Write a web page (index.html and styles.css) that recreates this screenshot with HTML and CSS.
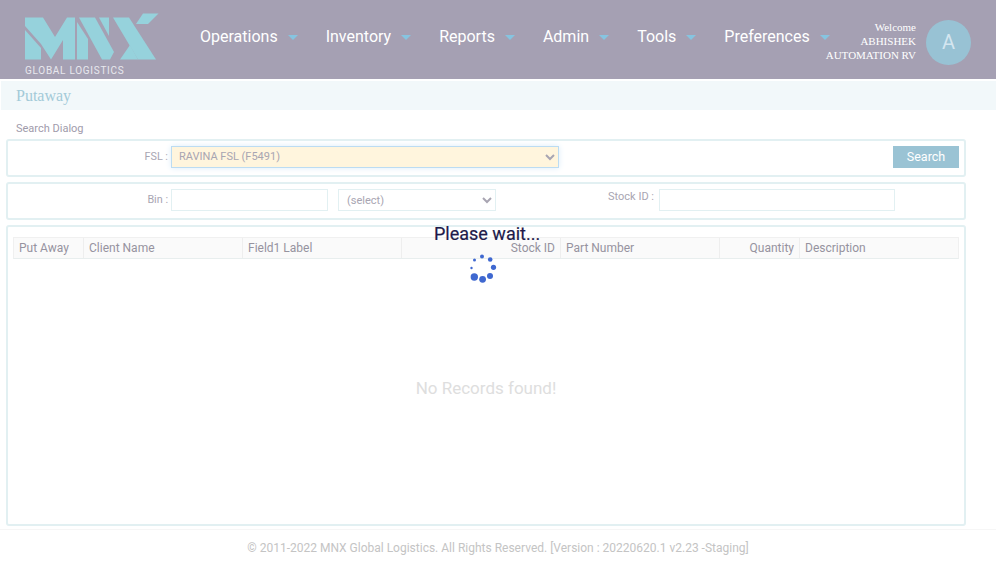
FILE: index.html
```html
<!DOCTYPE html>
<html lang="en">
<head>
    <meta charset="UTF-8">
    <meta name="viewport" content="width=device-width, initial-scale=1.0">
    <title>Putaway</title>
    <link rel="stylesheet" href="styles.css">
</head>
<body>
    <header class="topbar">
        <div class="logo">
            <svg class="logo-mark" width="134" height="48" viewBox="25 13 134 48" fill="#96d2dc">
                <path d="M25 17.5H43L55 37L67 17.5H75V59.5H63V40L51 59.5L41 44L25 26Z"/>
                <path d="M25 30L41 48V59.5H25Z"/>
                <path d="M77 22L88 39V59.5H77Z"/>
                <path d="M79 17.5H95L114 52L110 59.5H102Z"/>
                <path d="M99 17.5H109V36Z"/>
                <path d="M113 17.5H129L156 59.5H138Z"/>
                <path d="M120 59.5L130 45L138 59.5Z"/>
                <path d="M143 13.5H158.500L148 24H136Z"/>
            </svg>
            <span class="logo-text">GLOBAL LOGISTICS</span>
        </div>
        <nav class="menu">
            <a class="menu-item" href="#">Operations<i class="caret"></i></a>
            <a class="menu-item" href="#">Inventory<i class="caret"></i></a>
            <a class="menu-item" href="#">Reports<i class="caret"></i></a>
            <a class="menu-item" href="#">Admin<i class="caret"></i></a>
            <a class="menu-item" href="#">Tools<i class="caret"></i></a>
            <a class="menu-item" href="#">Preferences<i class="caret"></i></a>
        </nav>
        <div class="user">
            <div class="user-name">Welcome<br>ABHISHEK<br>AUTOMATION RV</div>
            <div class="avatar">A</div>
        </div>
    </header>

    <div class="page-title">Putaway</div>

    <div class="search-label">Search Dialog</div>

    <div class="panel panel-fsl">
        <label class="field-label">FSL :</label>
        <select class="fsl-select">
            <option>RAVINA FSL (F5491)</option>
        </select>
        <button class="search-btn" type="button">Search</button>
    </div>

    <div class="panel panel-filter">
        <label class="field-label">Bin :</label>
        <input class="bin-input" type="text">
        <select class="status-select">
            <option>(select)</option>
        </select>
        <label class="stock-label">Stock ID :</label>
        <input class="stock-input" type="text">
    </div>

    <div class="panel panel-grid">
        <div class="grid-head">
            <div class="col col-putaway">Put Away</div>
            <div class="col col-client">Client Name</div>
            <div class="col col-field">Field1 Label</div>
            <div class="col col-stock">Stock ID</div>
            <div class="col col-part">Part Number</div>
            <div class="col col-qty">Quantity</div>
            <div class="col col-desc">Description</div>
        </div>
        <div class="no-records">No Records found!</div>
    </div>

    <footer class="footer">© 2011-2022 MNX Global Logistics. All Rights Reserved. [Version : 20220620.1 v2.23 -Staging]</footer>

    <div class="loading">
        <div class="loading-text">Please wait...</div>
        <svg class="spinner" width="30" height="30" viewBox="0 0 30 30" fill="#3f68d0">
            <circle cx="15" cy="3.5" r="2"/>
            <circle cx="23.2" cy="6.5" r="2.3"/>
            <circle cx="26.5" cy="14.3" r="2.6"/>
            <circle cx="23" cy="23" r="3"/>
            <circle cx="15.6" cy="26.3" r="3.4"/>
            <circle cx="7.3" cy="24" r="3.7"/>
            <circle cx="4.5" cy="15" r="1.2"/>
            <circle cx="7.5" cy="7" r="1.5"/>
        </svg>
    </div>
</body>
</html>
```

FILE: styles.css
```css
body {
    margin: 0;
    padding: 0;
    font-family: Roboto, Arial, sans-serif;
    background-color: white;
    position: relative;
}

.topbar {
    display: flex;
    height: 79px;
    background-color: #a5a0b3;
    color: white;
}

.logo {
    flex-shrink: 0;
    width: 200px;
    padding: 13px 0 0 25px;
    box-sizing: border-box;
}

.logo-mark {
    display: block;
}

.logo-text {
    display: block;
    margin-top: 4px;
    font-size: 10px;
    line-height: 11px;
    letter-spacing: 0.72px;
    white-space: nowrap;
    color: #e8e8ee;
}

.menu {
    display: flex;
    flex-shrink: 0;
    align-items: center;
    height: 72px;
}

.menu-item {
    display: flex;
    align-items: center;
    color: white;
    text-decoration: none;
    font-size: 16px;
    padding-right: 28px;
}

.menu-item:last-child {
    padding-right: 0;
}

.caret {
    width: 0;
    height: 0;
    margin-left: 10px;
    margin-top: 3px;
    border-left: 5px solid transparent;
    border-right: 5px solid transparent;
    border-top: 5px solid #86c4e0;
}

.user {
    display: flex;
    flex: 1;
    justify-content: flex-end;
    align-items: center;
    margin-left: -6px;
    padding-right: 25px;
    height: 85px;
}

.user-name {
    margin-bottom: 3px;
    font-family: "Liberation Serif", serif;
    font-size: 11px;
    line-height: 14px;
    text-align: right;
    white-space: nowrap;
}

.avatar {
    flex-shrink: 0;
    width: 45px;
    height: 45px;
    margin-left: 10px;
    border-radius: 50%;
    background-color: #98c2d4;
    color: #d4e6f0;
    font-size: 20px;
    line-height: 45px;
    text-align: center;
}

.page-title {
    margin: 2px 0 0 1px;
    height: 29px;
    padding-left: 15px;
    background-color: #f2f8fa;
    font-family: "Liberation Serif", serif;
    font-size: 16px;
    line-height: 29px;
    color: #a3cad8;
}

.search-label {
    margin: 12px 0 0 16px;
    font-size: 11px;
    line-height: 13px;
    color: #9f9bab;
}

.panel {
    display: flex;
    align-items: center;
    box-sizing: border-box;
    width: 960px;
    margin-left: 6px;
    border: 2px solid #e2f0f2;
    border-radius: 3px;
}

.panel-fsl {
    height: 38px;
    margin-top: 4px;
    padding-bottom: 2px;
}

.panel-filter {
    height: 38px;
    margin-top: 5px;
    padding-bottom: 2px;
}

.panel-grid {
    display: block;
    height: 301px;
    margin-top: 5px;
    padding: 10px 5px 0;
}

.field-label {
    width: 160px;
    margin-bottom: 2px;
    text-align: right;
    font-size: 10.8px;
    color: #a8a5b2;
}

select, input {
    box-sizing: border-box;
    font-family: Roboto, Arial, sans-serif;
    font-size: 11px;
    color: #a8a5b2;
    background-color: white;
    border: 1px solid #e2f0f2;
    border-radius: 0;
    outline: none;
}

.fsl-select {
    width: 388px;
    height: 22px;
    margin-left: 3px;
    padding-left: 3px;
    padding-bottom: 2px;
    background-color: #fff5dd;
    border-color: #bcdcf2;
    box-shadow: 0 0 6px #dcecf8;
}

.search-btn {
    width: 66px;
    height: 22px;
    margin-left: auto;
    margin-right: 5px;
    padding: 0 0 2px;
    border: none;
    background-color: #9ac3d4;
    color: white;
    font-family: Roboto, Arial, sans-serif;
    font-size: 12.5px;
    cursor: pointer;
}

.bin-input {
    width: 157px;
    height: 22px;
    margin-left: 3px;
}

.status-select {
    width: 158px;
    height: 22px;
    margin-left: 10px;
    padding-left: 4px;
}

.stock-label {
    width: 158px;
    margin-bottom: 8px;
    text-align: right;
    font-size: 11px;
    color: #a8a5b2;
}

.stock-input {
    width: 236px;
    height: 22px;
    margin-left: 5px;
}

.grid-head {
    display: flex;
    height: 22px;
    box-sizing: border-box;
    background-color: #fafafa;
    border: 1px solid #f0f0f0;
    border-bottom: 1px solid #e8eeee;
    font-size: 12px;
    line-height: 20px;
    color: #96939f;
}

.col {
    box-sizing: border-box;
    padding: 0 5px;
    border-right: 1px solid #eeeeee;
}

.col-putaway { width: 70px; }
.col-client { width: 159px; }
.col-field { width: 159px; }
.col-stock { width: 159px; text-align: right; }
.col-part { width: 159px; }
.col-qty { width: 80px; text-align: right; }
.col-desc { flex: 1; border-right: none; }

.no-records {
    margin-top: 119px;
    text-align: center;
    font-size: 17px;
    line-height: 20px;
    color: #dedede;
}

.footer {
    margin-top: 3px;
    height: 37px;
    border-top: 1px solid #f6f6f6;
    text-align: center;
    font-size: 12px;
    line-height: 36px;
    color: #c4c4c4;
}

/* sits over the grid while data loads */
.loading {
    position: absolute;
    top: 223px;
    left: 434px;
    width: 106px;
}

.loading-text {
    font-size: 18px;
    line-height: 21px;
    color: #1e1a4a;
    white-space: nowrap;
    -webkit-text-stroke: 0.2px #1e1a4a;
}

.spinner {
    display: block;
    margin: 9px 0 0 33px;
    filter: blur(0.4px);
}
```
